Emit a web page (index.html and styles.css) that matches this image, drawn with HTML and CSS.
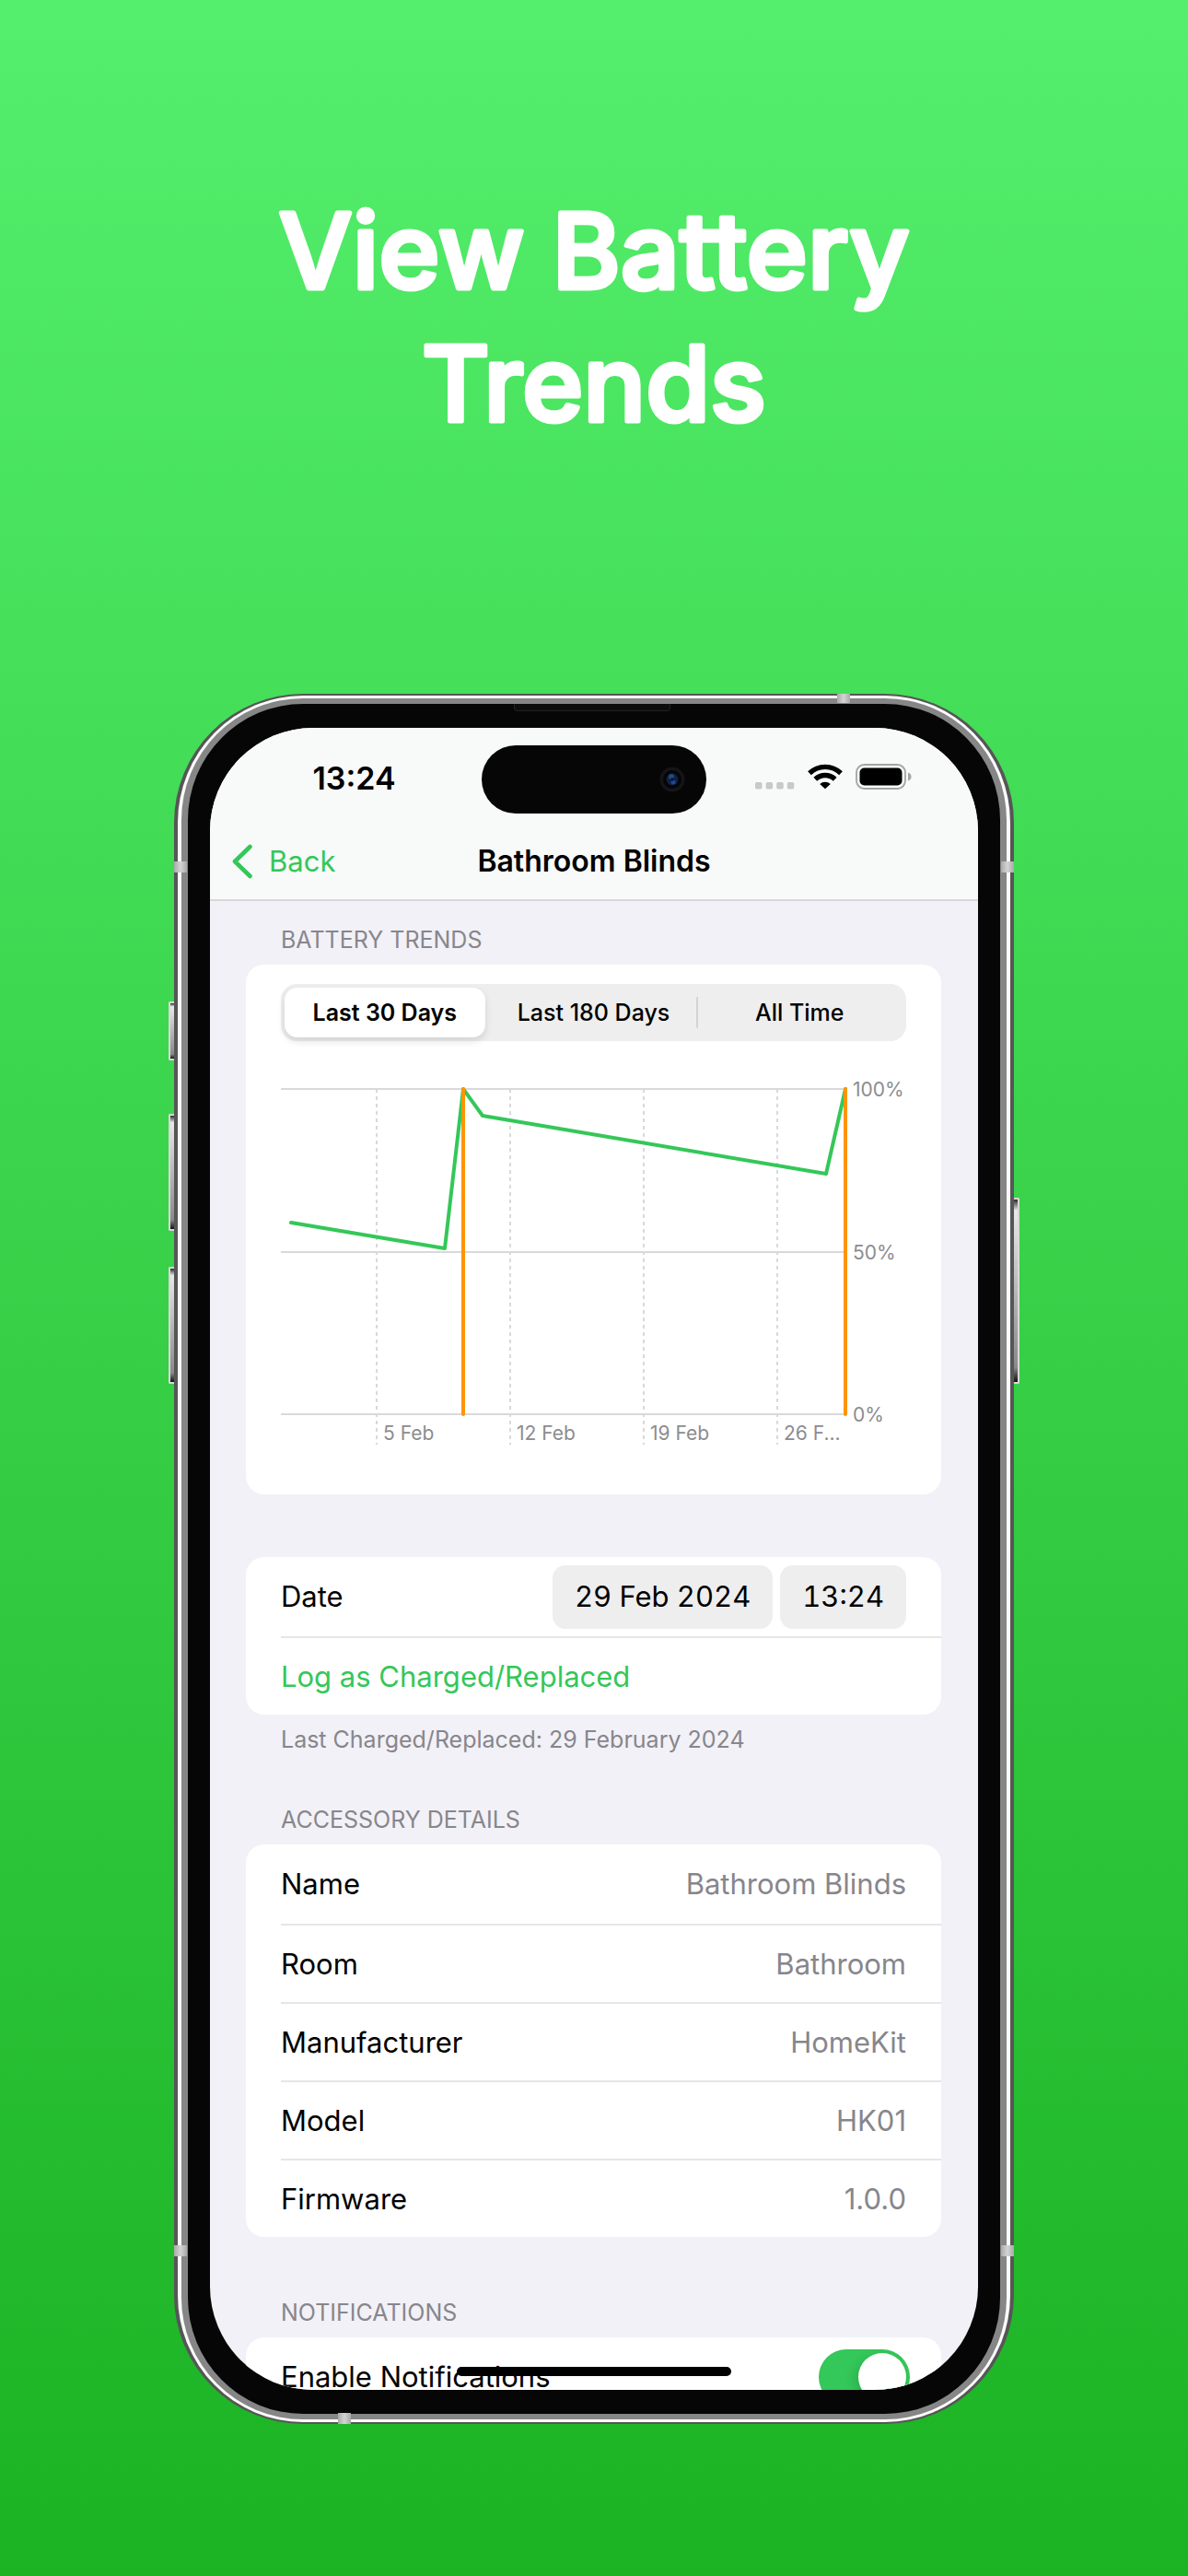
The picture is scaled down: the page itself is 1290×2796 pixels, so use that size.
FILE: index.html
```html
<!DOCTYPE html>
<html lang="en">
<head>
<meta charset="utf-8">
<meta name="viewport" content="width=device-width, initial-scale=1">
<title>View Battery Trends</title>
<link rel="stylesheet" href="styles.css">
</head>
<body>
<main class="page">
  <h1 class="headline">
    <svg class="headline-art" viewBox="0 0 760 340">
      <text x="380" y="129">View Battery</text>
      <text x="380" y="273">Trends</text>
    </svg>
  </h1>

  <div class="phone">
    <span class="key key-action"></span>
    <span class="key key-up"></span>
    <span class="key key-down"></span>
    <span class="key key-side"></span>
    <span class="band band-left band-high"></span>
    <span class="band band-right band-high"></span>
    <span class="band band-left band-low"></span>
    <span class="band band-right band-low"></span>
    <span class="band band-top"></span>
    <span class="band band-bottom"></span>

    <div class="bezel">
      <span class="earpiece"></span>
      <div class="screen">
        <header class="bar">
          <div class="status">
            <span class="clock">13:24</span>
            <span class="island">
              <svg class="camera" viewBox="0 0 28 28" aria-hidden="true">
                <circle cx="14" cy="14" r="13.5" fill="#151517"/>
                <circle cx="14" cy="14" r="10" fill="#050507"/>
                <circle cx="14" cy="14" r="6.5" fill="#10203f"/>
                <circle cx="13" cy="11" r="3" fill="#1d4a80"/>
                <circle cx="15" cy="17" r="2.5" fill="#23449a"/>
                <circle cx="14" cy="14" r="1.8" fill="#0a1030"/>
              </svg>
            </span>
            <span class="indicators">
              <svg class="dots" viewBox="0 0 43 8" aria-hidden="true" fill="#c9c9ca">
                <rect x="0" y="0" width="7.500" height="7.500" rx="1.800"/>
                <rect x="11.600" y="0" width="7.500" height="7.500" rx="1.800"/>
                <rect x="23.200" y="0" width="7.500" height="7.500" rx="1.800"/>
                <rect x="34.800" y="0" width="7.500" height="7.500" rx="1.800"/>
              </svg>
              <svg class="wifi" viewBox="0 0 38 28" aria-hidden="true">
                <g fill="none" stroke="#000" stroke-width="5.400">
                  <path d="M2 10.2a24.5 24.5 0 0 1 34 0"/>
                  <path d="M8.3 16.8a15.5 15.5 0 0 1 21.400 0"/>
                </g>
                <path d="M19 27.300l-5.800-5.400a8.600 8.600 0 0 1 11.600 0z" fill="#000"/>
              </svg>
              <svg class="battery" viewBox="0 0 62 28" aria-hidden="true">
                <rect x="1" y="1" width="53" height="26" rx="8.500" fill="none" stroke="#a4a4a5" stroke-width="1.800"/>
                <rect x="4.500" y="4.500" width="46" height="19" rx="5" fill="#000"/>
                <path d="M57 9.500q3.500 1 3.500 4.500t-3.500 4.500z" fill="#a4a4a5"/>
              </svg>
            </span>
          </div>
          <nav class="nav">
            <a class="back" href="#">
              <svg class="chevron" viewBox="0 0 22 38" aria-hidden="true">
                <path d="M19.500 3 3 19l16.500 16" fill="none" stroke="#34c759" stroke-width="4.600" stroke-linecap="round" stroke-linejoin="round"/>
              </svg>
              Back
            </a>
            <h2 class="title">Bathroom Blinds</h2>
          </nav>
        </header>

        <div class="list">
          <section>
            <h3 class="caption">BATTERY TRENDS</h3>
            <div class="card trends">
              <div class="segments">
                <button class="segment selected" type="button">Last 30 Days</button>
                <button class="segment" type="button">Last 180 Days</button>
                <button class="segment divided" type="button">All Time</button>
              </div>
              <svg class="chart" viewBox="0 0 679 400" role="img" aria-label="Battery level over the last 30 days">
                <g stroke="#d9d9db" stroke-width="2">
                  <path d="M0 10h613M0 187h613M0 363h613"/>
                  <path d="M104 10v386M249 10v386M394 10v386M539 10v386" stroke-dasharray="4 4"/>
                </g>
                <path d="M11 155 178 183 198 10 219 39 592 102 613 10" fill="none" stroke="#34c759" stroke-width="4" stroke-linecap="round" stroke-linejoin="round"/>
                <path d="M198 10v353M613 10v353" stroke="#ff9500" stroke-width="4" stroke-linecap="round"/>
                <g class="axis">
                  <text x="621" y="18">100%</text>
                  <text x="621" y="195">50%</text>
                  <text x="621" y="371">0%</text>
                  <text x="111" y="391">5 Feb</text>
                  <text x="256" y="391">12 Feb</text>
                  <text x="401" y="391">19 Feb</text>
                  <text x="546" y="391">26 F...</text>
                </g>
              </svg>
            </div>
          </section>

          <section class="spaced">
            <div class="card">
              <div class="row">
                <span>Date</span>
                <span class="pickers">
                  <button class="picker" type="button">29 Feb 2024</button>
                  <button class="picker" type="button">13:24</button>
                </span>
              </div>
              <div class="row">
                <button class="action" type="button">Log as Charged/Replaced</button>
              </div>
            </div>
            <p class="footnote">Last Charged/Replaced: 29 February 2024</p>
          </section>

          <section>
            <h3 class="caption">ACCESSORY DETAILS</h3>
            <dl class="card">
              <div class="row"><dt>Name</dt><dd>Bathroom Blinds</dd></div>
              <div class="row"><dt>Room</dt><dd>Bathroom</dd></div>
              <div class="row"><dt>Manufacturer</dt><dd>HomeKit</dd></div>
              <div class="row"><dt>Model</dt><dd>HK01</dd></div>
              <div class="row"><dt>Firmware</dt><dd>1.0.0</dd></div>
            </dl>
          </section>

          <section class="spaced-caption">
            <h3 class="caption">NOTIFICATIONS</h3>
            <div class="card">
              <div class="row">
                <label for="notify">Enable Notifications</label>
                <input class="switch" id="notify" type="checkbox" checked>
              </div>
            </div>
          </section>
        </div>
        <span class="home-indicator"></span>
      </div>
    </div>
  </div>
</main>
</body>
</html>
```
FILE: styles.css
```css
* {
  box-sizing: border-box;
}

body {
  margin: 0;
  font-family: Inter, "Liberation Sans", sans-serif;
  color: #000;
}

h2, h3, p, dl, dd {
  margin: 0;
}

button {
  margin: 0;
  padding: 0;
  border: 0;
  background: none;
  color: inherit;
  font: inherit;
}

.page {
  display: flex;
  flex-direction: column;
  align-items: center;
  min-height: 100vh;
  padding-bottom: 165px;
  background: linear-gradient(#54ef6d, #1bb223);
}

/* Headline */

.headline {
  width: 100%;
  max-width: 760px;
  margin: 184px 0 229px;
}

.headline-art {
  display: block;
  width: 100%;
}

.headline-art text {
  font-size: 113px;
  font-weight: 500;
  text-anchor: middle;
  fill: #fff;
  stroke: #fff;
  stroke-width: 5px;
  stroke-linejoin: round;
}

/* Phone body */

.phone {
  position: relative;
  display: flex;
  width: 100%;
  max-width: 912px;
  aspect-ratio: 912 / 1878;
  padding: 3px 4px;
  border: solid #565656;
  border-width: 2px 4px;
  border-radius: 140px;
  background: #fbfbfb;
}

.bezel {
  position: relative;
  display: flex;
  flex: 1;
  padding: 26px 24px;
  border: solid #868686;
  border-width: 6px 7px;
  border-radius: 132px;
  background: #060606;
}

.earpiece {
  position: absolute;
  top: 0;
  left: 50%;
  width: 170px;
  height: 8px;
  margin-left: -87px;
  border: 1px solid #222;
  border-top: 0;
  border-radius: 0 0 4px 4px;
  background: #0d0d0d;
}

.key {
  position: absolute;
  left: -10px;
  width: 6px;
  border: 2px solid #d8d8d8;
  border-right-width: 0;
  border-radius: 2px 0 0 2px;
  background: linear-gradient(#2a2a2a, #e8e8e8 6%, #8a8a8a 92%, #111);
}

.key-action {
  top: 17.7%;
  height: 64px;
}

.key-up {
  top: 24.2%;
  height: 127px;
}

.key-down {
  top: 33.1%;
  height: 127px;
}

.key-side {
  top: 29.1%;
  right: -10px;
  left: auto;
  height: 202px;
  border-width: 2px 2px 2px 0;
  border-radius: 0 2px 2px 0;
}

.band {
  position: absolute;
  z-index: 1;
  width: 14px;
  height: 12px;
  background: linear-gradient(90deg, #a9a9a9, #d4d4d4, #a9a9a9);
}

.band-left {
  left: -4px;
}

.band-right {
  right: -4px;
}

.band-high {
  top: 9.6%;
}

.band-low {
  bottom: 9.6%;
}

.band-top {
  top: -2px;
  right: 174px;
  height: 10px;
}

.band-bottom {
  bottom: -2px;
  left: 174px;
}

/* Screen */

.screen {
  position: relative;
  flex: 1;
  min-width: 0;
  overflow: hidden;
  border-radius: 112px;
  background: #f2f1f7;
}

.bar {
  height: 188px;
  border-bottom: 2px solid #d8d8dc;
  background: #f8f9f9;
}

.status {
  display: grid;
  grid-template-columns: 1fr 244px 1fr;
  align-items: center;
  padding-top: 19px;
}

.clock {
  padding: 0 0 2px 18px;
  font-size: 34px;
  font-weight: 600;
  line-height: 40px;
  text-align: center;
}

.island {
  display: flex;
  align-items: center;
  justify-content: flex-end;
  height: 74px;
  padding-right: 23px;
  border-radius: 37px;
  background: #060606;
}

.camera {
  width: 28px;
  height: 28px;
}

.indicators {
  display: flex;
  align-items: flex-end;
  gap: 14px;
  padding: 0 0 6px 53px;
}

.dots {
  width: 43px;
  height: 8px;
}

.wifi {
  width: 38px;
  height: 28px;
}

.battery {
  width: 62px;
  height: 28px;
}

.nav {
  display: grid;
  grid-template-columns: 1fr auto 1fr;
  align-items: center;
  padding: 32px 24px 0;
}

.back {
  display: flex;
  align-items: center;
  gap: 18px;
  color: #34c759;
  font-size: 31px;
  line-height: 40px;
  text-decoration: none;
}

.chevron {
  width: 22px;
  height: 38px;
}

.title {
  font-size: 32px;
  font-weight: 600;
  line-height: 40px;
}

/* Grouped list */

.list {
  padding: 0 40px 0 39px;
}

.caption,
.footnote {
  padding: 0 38px;
  color: #87868c;
  font-size: 25px;
  font-weight: 400;
  line-height: 30px;
}

.caption {
  padding-top: 27px;
  padding-bottom: 12px;
}

.footnote {
  padding-top: 12px;
  padding-bottom: 30px;
}

.card {
  border-radius: 20px;
  background: #fff;
}

.spaced {
  padding-top: 68px;
}

.spaced-caption {
  padding-top: 40px;
}

.row {
  display: flex;
  align-items: center;
  justify-content: space-between;
  height: 85px;
  margin-left: 38px;
  padding-right: 38px;
  font-size: 31px;
  line-height: 40px;
}

.row:first-child {
  height: 86px;
}

.row + .row {
  border-top: 2px solid #e6e6e8;
}

.row dd {
  color: #87868c;
}

.pickers {
  display: flex;
  gap: 8px;
}

.picker {
  height: 69px;
  padding: 0 24px;
  border-radius: 14px;
  background: #eee;
  font-variant-numeric: tabular-nums;
}

.action {
  color: #34c759;
}

.trends {
  padding: 21px 38px 50px;
}

.segments {
  display: grid;
  grid-template-columns: repeat(3, 1fr);
  height: 62px;
  padding: 4px;
  border-radius: 17px;
  background: #eee;
}

.segment {
  border-radius: 14px;
  font-size: 25px;
  font-weight: 500;
  white-space: nowrap;
}

.selected {
  margin-right: 6px;
  background: #fff;
  box-shadow: 0 4px 8px rgba(0, 0, 0, 0.12);
  font-weight: 600;
}

.divided {
  background: linear-gradient(#d3d3d5, #d3d3d5) 0 50% / 2px 34px no-repeat;
}

.chart {
  display: block;
  width: 100%;
  margin-top: 42px;
  overflow: visible;
}

.axis {
  fill: #8c8c90;
  font-size: 21px;
}

.switch {
  position: relative;
  width: 99px;
  height: 60px;
  margin: 0 -4px 0 0;
  border-radius: 30px;
  appearance: none;
  background: #d8d8dc;
}

.switch::before {
  content: "";
  position: absolute;
  top: 4px;
  left: 4px;
  width: 52px;
  height: 52px;
  border-radius: 50%;
  background: #fff;
}

.switch:checked {
  background: #34c759;
}

.switch:checked::before {
  left: 43px;
  box-shadow: -4px 4px 12px rgba(0, 0, 0, 0.12);
}

.home-indicator {
  position: absolute;
  bottom: 15px;
  left: 50%;
  width: 298px;
  height: 10px;
  margin-left: -149px;
  border-radius: 5px;
  background: #000;
}
```
